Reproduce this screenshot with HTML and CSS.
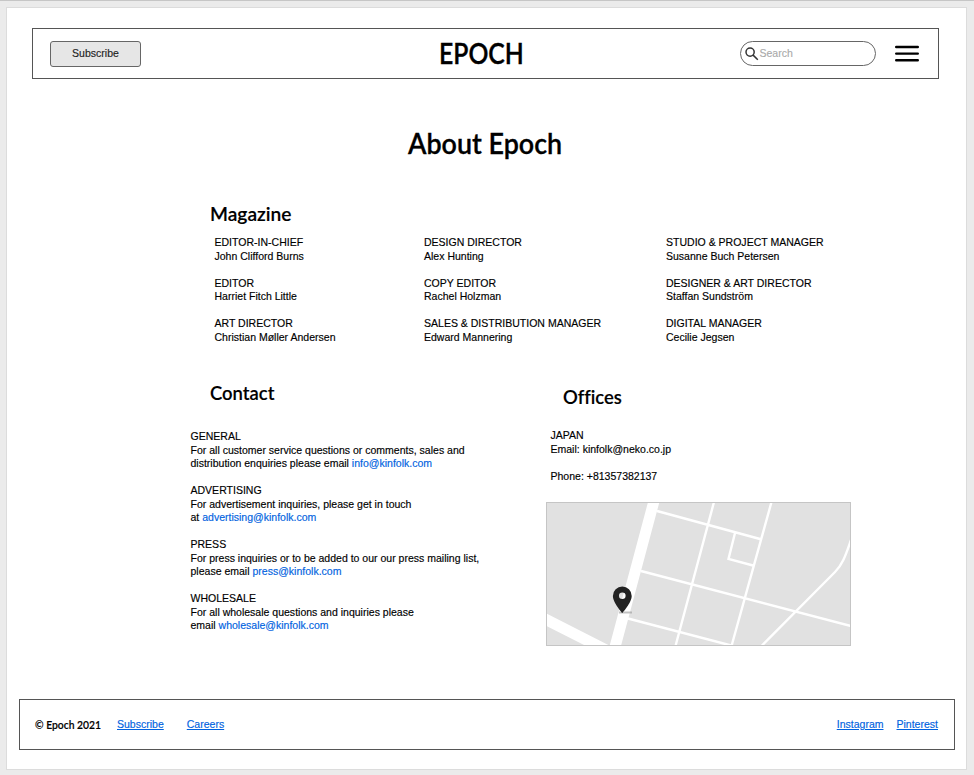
FILE: index.html
```html
<!DOCTYPE html>
<html lang="en">
<head>
<meta charset="utf-8">
<title>About Epoch</title>
<link rel="stylesheet" href="styles.css">
</head>
<body>
<div class="page">
  <header class="header">
    <button class="subscribe">Subscribe</button>
    <div class="brand">EPOCH</div>
    <label class="search">
      <svg class="search-icon" width="14" height="14" viewBox="0 0 14 14"><circle cx="5.1" cy="5.1" r="4.1"/><path d="M8.1 8.1 12.8 12.8"/></svg>
      <span>Search</span>
    </label>
    <svg class="menu" width="24" height="18" viewBox="0 0 24 18"><path d="M1.2 2H22.8M1.2 8.6H22.8M1.2 15.3H22.8"/></svg>
  </header>
  <main>
    <h1>About Epoch</h1>
    <section class="magazine">
      <h2>Magazine</h2>
      <div class="staff">
        <p>EDITOR-IN-CHIEF<br>John Clifford Burns</p>
        <p>DESIGN DIRECTOR<br>Alex Hunting</p>
        <p>STUDIO &amp; PROJECT MANAGER<br>Susanne Buch Petersen</p>
        <p>EDITOR<br>Harriet Fitch Little</p>
        <p>COPY EDITOR<br>Rachel Holzman</p>
        <p>DESIGNER &amp; ART DIRECTOR<br>Staffan Sundström</p>
        <p>ART DIRECTOR<br>Christian Møller Andersen</p>
        <p>SALES &amp; DISTRIBUTION MANAGER<br>Edward Mannering</p>
        <p>DIGITAL MANAGER<br>Cecilie Jegsen</p>
      </div>
    </section>
    <div class="lower">
      <section class="contact">
        <h2 class="contact-title">Contact</h2>
        <p>GENERAL<br>For all customer service questions or comments, sales and<br>distribution enquiries please email <a href="#">info@kinfolk.com</a></p>
        <p>ADVERTISING<br>For advertisement inquiries, please get in touch<br>at <a href="#">advertising@kinfolk.com</a></p>
        <p>PRESS<br>For press inquiries or to be added to our our press mailing list,<br>please email <a href="#">press@kinfolk.com</a></p>
        <p>WHOLESALE<br>For all wholesale questions and inquiries please<br>email <a href="#">wholesale@kinfolk.com</a></p>
      </section>
      <section class="offices">
        <h2 class="offices-title">Offices</h2>
        <p>JAPAN<br>Email: kinfolk@neko.co.jp</p>
        <p>Phone: +81357382137</p>
        <svg class="map" width="305" height="144" viewBox="0 0 305 144">
          <rect class="land" width="305" height="144"/>
          <path class="avenue" d="M108 -1 69 145M-2 116.500 64 150"/>
          <path class="street" d="M111 9 214 37M168 0 129.500 144M225.500 0 185.500 144M189 31 182.500 57 207 63.500M95 69 305 124M82 116.500 187 144M215.500 144 289 70C297 62 300 52 305 38"/>
          <path class="shadow" d="M73 110.500H86"/>
          <path class="pin" fill-rule="evenodd" d="M76.300 84.500A9.400 9.400 0 0 0 66.900 93.900C66.900 100.500 76.300 111 76.300 111S85.700 100.500 85.700 93.900A9.400 9.400 0 0 0 76.300 84.500ZM76.300 90.500A3.300 3.300 0 1 1 76.300 97.100A3.300 3.300 0 1 1 76.300 90.500Z"/>
          <rect class="frame" x=".5" y=".5" width="304" height="143"/>
        </svg>
      </section>
    </div>
  </main>
  <footer class="footer">
    <span class="copyright">© Epoch 2021</span>
    <a href="#">Subscribe</a>
    <a href="#" class="careers">Careers</a>
    <a href="#" class="instagram">Instagram</a>
    <a href="#" class="pinterest">Pinterest</a>
  </footer>
</div>
</body>
</html>
```
FILE: styles.css
```css
* { box-sizing: border-box; }
body {
  margin: 0;
  height: 775px;
  padding: 6px 7px 5px 6px;
  border-top: 1px solid #c6c6c6;
  background: #ebebeb;
  color: #000;
  font: 10.53px/13.5px "Liberation Sans", Arial, sans-serif;
  -webkit-text-stroke: .15px currentColor;
}
h1, h2, p { margin: 0; }
a { color: #0062e0; text-decoration: none; }
.page {
  display: flex;
  flex-direction: column;
  width: 961px;
  height: 763px;
  padding: 20px 11px 19px 12px;
  border: 1px solid #dcdcdc;
  background: #fff;
}
.header {
  display: flex;
  flex: none;
  align-items: center;
  width: 907px;
  height: 51px;
  margin-left: 13px;
  padding: 0 19px 0 17px;
  border: 1px solid #555;
}
.subscribe {
  width: 91px;
  height: 26px;
  padding: 0;
  border: 1px solid #666;
  border-radius: 3px;
  background: #e6e6e6;
  color: #222;
  font: inherit;
}
.brand, h1, h2, .copyright {
  font-family: Lato, sans-serif;
  font-weight: 600;
  font-variant-ligatures: none;
  white-space: nowrap;
  transform-origin: left center;
}
.brand { width: 100px; margin: -2px 0 0 298px; font-size: 28px; line-height: 38px; transform: scaleX(.885); -webkit-text-stroke-width: .35px; }
.search {
  display: flex;
  align-items: center;
  gap: .5px;
  width: 136px;
  height: 25px;
  margin-left: auto;
  padding-left: 4px;
  border: 1px solid #666;
  border-radius: 13px;
  color: #aaa;
}
.search-icon { fill: none; stroke: #333; stroke-width: 1.5; }
.menu { margin-left: 19px; fill: none; stroke: #000; stroke-width: 2.4; stroke-linecap: round; }
main { flex: 1; }
h1 { width: 155px; margin: 45px 0 0 389px; font-size: 28px; line-height: 38px; transform: scaleX(.96); -webkit-text-stroke-width: .3px; }
h2 { font-size: 19px; line-height: 26px; }
.magazine { margin: 39px 0 0 191px; }
.magazine h2 { transform: scaleX(1.01); }
.staff {
  display: grid;
  grid-template-columns: 209.5px 242px auto;
  gap: 13.5px 0;
  margin: 9px 0 0 4.5px;
}
.lower {
  display: grid;
  grid-template-columns: 356px 305px;
  margin: 36px 0 0 171px;
}
.contact p { margin: 0 0 13.5px .5px; white-space: nowrap; }
.contact-title { margin: 0 0 24px 20px; transform: scaleX(.97); }
.offices-title { margin: 4px 0 19px 17px; transform: scaleX(.97); }
.offices p { margin: 0 0 13.5px 4.5px; }
.map { display: block; margin-top: 19px; }
.land { fill: #e1e1e1; }
.frame { fill: none; stroke: #c5c5c5; }
.avenue { fill: none; stroke: #fff; stroke-width: 11; }
.street { fill: none; stroke: #fff; stroke-width: 2.4; }
.shadow { stroke: #999; stroke-opacity: .6; stroke-width: 2; }
.pin { fill: #222; }
.footer {
  display: flex;
  flex: none;
  align-items: center;
  width: 936px;
  height: 51px;
  padding: 0 16px 0 15px;
  border: 1px solid #555;
}
.footer a { text-decoration: underline; }
.copyright { width: 82px; font-size: 11px; transform: scaleX(.94); }
.careers { margin-left: 23px; }
.instagram { margin-left: auto; }
.pinterest { margin-left: 13px; }
```
